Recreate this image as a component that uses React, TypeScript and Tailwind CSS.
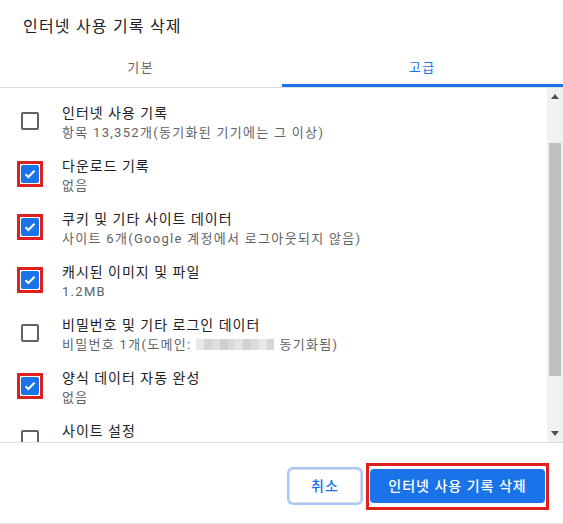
import React from "react";

interface Item {
  title: string;
  detail?: React.ReactNode;
  checked: boolean;
}

const font = "font-['Roboto','Noto_Sans_CJK_KR',sans-serif]";

function Blurred() {
  // pixelated domain name, hidden in the original
  const cells = ["#e8e8e8", "#d4d4d4", "#dedede", "#cfcfcf", "#dadada", "#e4e4e4", "#d2d2d2", "#dcdcdc", "#e8e8e8", "#d6d6d6"];
  return (
    <span className="mx-[5px] inline-flex h-[11px] w-[78px] align-[-1px]">
      {cells.map((c, i) => (
        <span key={i} className="h-full flex-1" style={{ background: c }} />
      ))}
    </span>
  );
}

const items: Item[] = [
  { title: "인터넷 사용 기록", detail: "항목 13,352개(동기화된 기기에는 그 이상)", checked: false },
  { title: "다운로드 기록", detail: "없음", checked: true },
  { title: "쿠키 및 기타 사이트 데이터", detail: "사이트 6개(Google 계정에서 로그아웃되지 않음)", checked: true },
  { title: "캐시된 이미지 및 파일", detail: "1.2MB", checked: true },
  {
    title: "비밀번호 및 기타 로그인 데이터",
    detail: (
      <>
        비밀번호 1개(도메인:
        <Blurred />
        동기화됨)
      </>
    ),
    checked: false,
  },
  { title: "양식 데이터 자동 완성", detail: "없음", checked: true },
  { title: "사이트 설정", checked: false },
];

function Checkbox({ checked }: { checked: boolean }) {
  if (!checked) {
    return <div className="h-[18px] w-[18px] rounded-[2px] border-2 border-[#5f6368] bg-white" />;
  }
  return (
    <div className="relative h-[18px] w-[18px]">
      <div className="flex h-full w-full items-center justify-center rounded-[2px] bg-[#1a73e8]">
        <svg width="12" height="10" viewBox="0 0 12 10" fill="none">
          <path d="M1.5 5.2 L4.4 8 L10.5 1.8" stroke="white" strokeWidth="2" />
        </svg>
      </div>
      <div className="absolute -inset-[4px] border-[3px] border-[#e01f1f]" />
    </div>
  );
}

export default function App() {
  return (
    <div className={`${font} flex h-[524px] w-[563px] flex-col overflow-hidden bg-white`}>
      <div className="h-[50px] pl-[23px] pt-[16px] text-[16px] leading-[22px] tracking-[1.2px] text-[#202124]">
        인터넷 사용 기록 삭제
      </div>

      <div className="flex h-[38px] border-b border-[#dadce0]">
        <div className="flex flex-1 items-start justify-center pt-[8px] text-[13px] tracking-[1.5px] text-[#5f6368]">기본</div>
        <div className="relative flex flex-1 items-start justify-center pt-[8px] text-[13px] tracking-[1.5px] text-[#1a73e8]">
          고급
          <div className="absolute bottom-0 left-0 right-0 h-[3px] bg-[#1a73e8]" />
        </div>
      </div>

      <div className="flex h-[355px] border-b border-[#dadce0]">
        <div className="flex-1 overflow-hidden pt-[15px]">
          {items.map((it) => (
            <div key={it.title} className="flex h-[53px] shrink-0">
              <div className="pl-[21px] pt-[9px]">
                <Checkbox checked={it.checked} />
              </div>
              <div className="pl-[23px]">
                <div className="text-[14px] leading-[20px] tracking-[1px] text-[#202124]">{it.title}</div>
                {it.detail && (
                  <div className="text-[13px] leading-[20px] tracking-[1.3px] text-[#5f6368]">{it.detail}</div>
                )}
              </div>
            </div>
          ))}
        </div>

        <div className="flex w-[16px] flex-col items-center bg-[#f1f1f1]">
          <div className="flex h-[17px] items-center justify-center">
            <svg width="8" height="5" viewBox="0 0 8 5">
              <path d="M0 5 L4 0 L8 5 Z" fill="#505050" />
            </svg>
          </div>
          <div className="mt-[38px] h-[233px] w-[12px] bg-[#c1c1c1]" />
          <div className="flex-1" />
          <div className="flex h-[17px] items-center justify-center">
            <svg width="8" height="5" viewBox="0 0 8 5">
              <path d="M0 0 L8 0 L4 5 Z" fill="#505050" />
            </svg>
          </div>
        </div>
      </div>

      <div className="flex flex-1 items-start justify-end gap-[9px] border-b border-[#e8e8e8] pr-[18px] pt-[26px]">
        <button className="h-[34px] w-[72px] rounded-[4px] border border-[#dadce0] bg-white text-[14px] font-medium tracking-[1px] text-[#1a73e8] ring-2 ring-[#a8c7fa]">
          취소
        </button>
        <div className="relative">
          <button className="h-[34px] w-[175px] rounded-[4px] bg-[#1a73e8] text-[14px] font-medium tracking-[1px] text-white">
            인터넷 사용 기록 삭제
          </button>
          <div className="absolute -inset-x-[4px] -bottom-[7px] -top-[6px] border-[3px] border-[#e01f1f]" />
        </div>
      </div>
    </div>
  );
}
